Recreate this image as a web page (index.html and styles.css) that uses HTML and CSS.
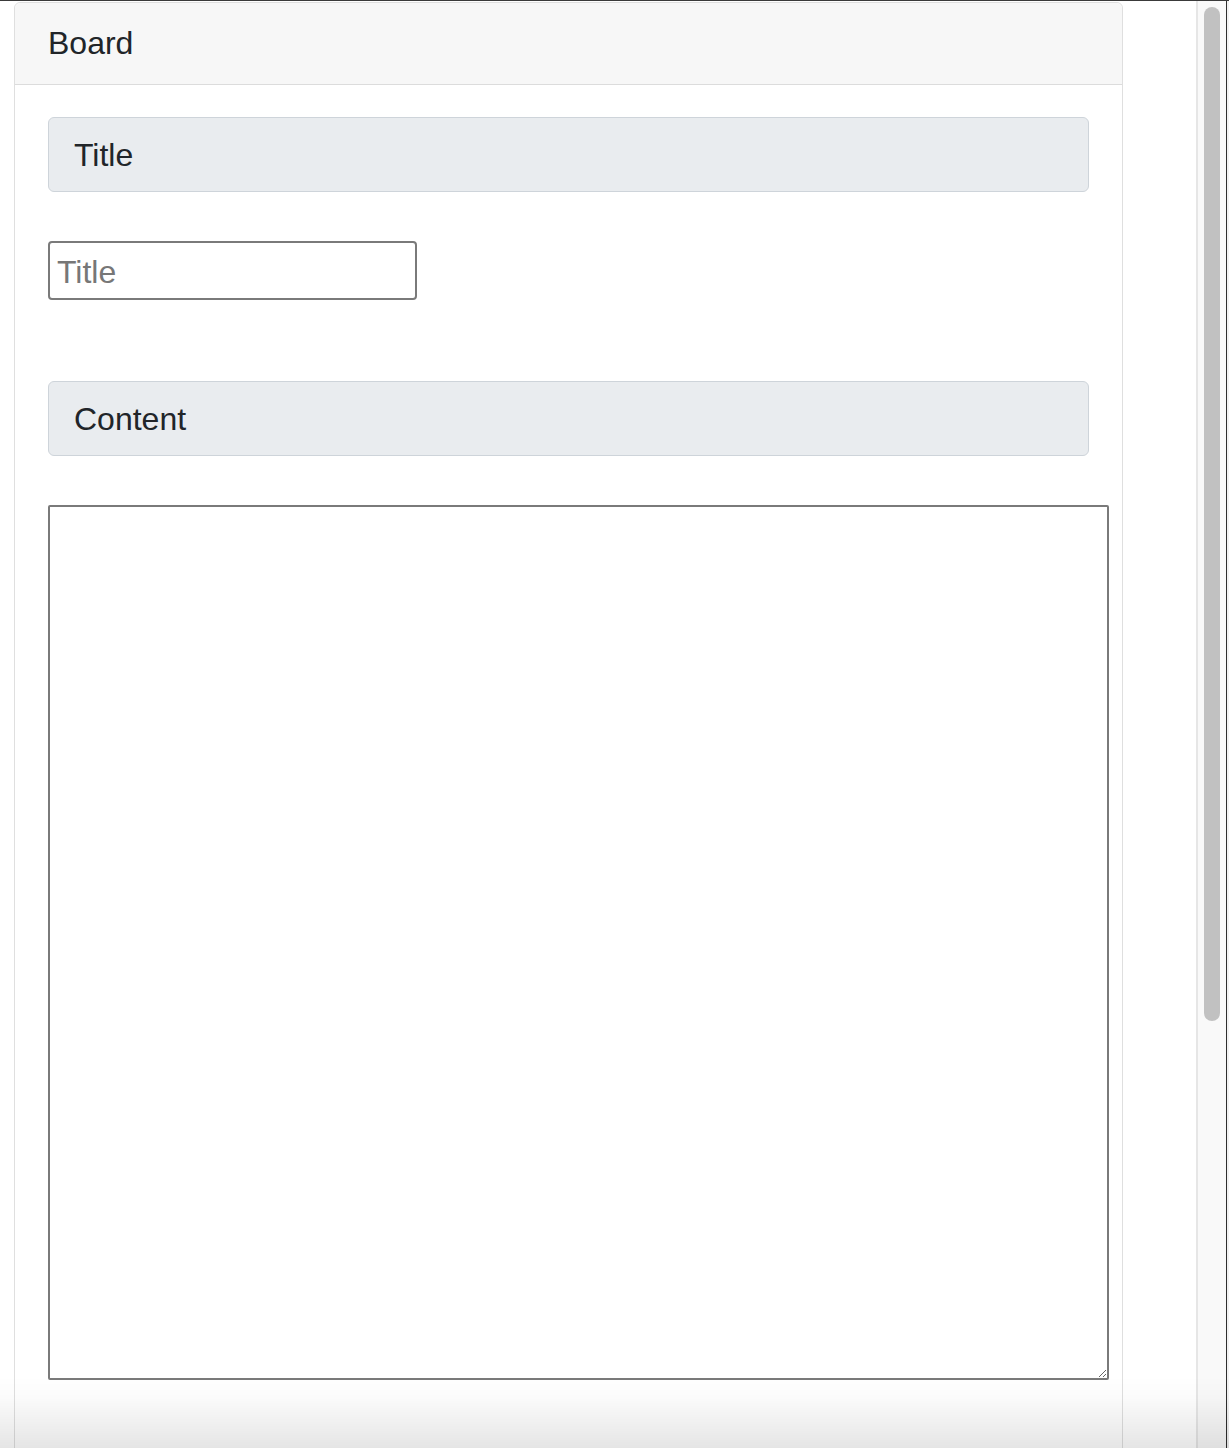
FILE: index.html
```html
<!DOCTYPE html>
<html lang="en">
<head>
<meta charset="utf-8">
<title>Board</title>
<link rel="stylesheet" href="styles.css">
</head>
<body>
<div class="frame">
  <main class="viewport">
    <section class="card">
      <header class="card-header">Board</header>
      <div class="card-body">
        <div class="label-box">Title</div>
        <input class="title-input" type="text" placeholder="Title">
        <div class="label-box content-label">Content</div>
        <textarea class="content-area"></textarea>
      </div>
    </section>
  </main>
  <div class="scrollbar"><div class="thumb"></div></div>
  <div class="edge"></div>
  <div class="edge-pad"></div>
</div>
<div class="bottom-fade"></div>
</body>
</html>
```
FILE: styles.css
```css
html, body {
  margin: 0;
  padding: 0;
  background: #ffffff;
}
body {
  width: 1229px;
  height: 1448px;
  overflow: hidden;
  font-family: "Liberation Sans", Arial, sans-serif;
  color: #212529;
}
.frame {
  display: flex;
  height: 1447px;
  border-top: 1px solid #3a3a3a;
  overflow: hidden;
}
.viewport {
  flex: 1;
  min-width: 0;
  padding: 1px 0 0 14px;
  overflow: hidden;
}
.card {
  width: 1109px;
  box-sizing: border-box;
  border: 1px solid #dfdfdf;
  border-radius: 6px;
  background: #fff;
}
.card-header {
  background: #f7f7f7;
  border-bottom: 1px solid #dcdcdc;
  border-radius: 6px 6px 0 0;
  font-size: 32px;
  line-height: 48px;
  padding: 16px 33px 17px;
}
.card-body {
  padding: 32px 33px 160px;
  display: flex;
  flex-direction: column;
  align-items: flex-start;
}
.label-box {
  align-self: stretch;
  background: #e9ecef;
  border: 1px solid #ced4da;
  border-radius: 6px;
  font-size: 32px;
  line-height: 48px;
  padding: 13px 24px 12px 25px;
  margin-bottom: 49px;
}
.title-input {
  box-sizing: border-box;
  width: 369px;
  height: 59px;
  margin: 0 0 81px;
  padding: 3px 7px 0;
  border: 2px solid #7a7a7a;
  border-radius: 4px;
  font-family: "Liberation Sans", Arial, sans-serif;
  font-size: 32px;
  color: #212529;
  background: #fff;
  outline: none;
}
.title-input::placeholder {
  color: #777777;
}
.content-area {
  box-sizing: border-box;
  width: 1061px;
  height: 875px;
  margin: 0;
  border: 2px solid #7a7a7a;
  border-radius: 2px;
  background: #fff;
  font-family: "Liberation Sans", Arial, sans-serif;
  font-size: 32px;
  outline: none;
}
.scrollbar {
  flex: none;
  width: 30px;
  box-sizing: border-box;
  border-left: 2px solid #e6e6e6;
  background: #f9f9f9;
  padding: 6px 0 0 6px;
}
.thumb {
  width: 16px;
  height: 1014px;
  border-radius: 8px;
  background: #c1c1c1;
}
.edge {
  width: 1px;
  flex: none;
  background: #2e2e2e;
}
.edge-pad {
  width: 2px;
  flex: none;
  background: #f2f2f2;
}
.bottom-fade {
  position: fixed;
  left: 0;
  right: 0;
  bottom: 0;
  height: 72px;
  pointer-events: none;
  background: linear-gradient(to bottom, rgba(0,0,0,0) 0%, rgba(0,0,0,0.015) 30%, rgba(0,0,0,0.1) 100%);
}
```
